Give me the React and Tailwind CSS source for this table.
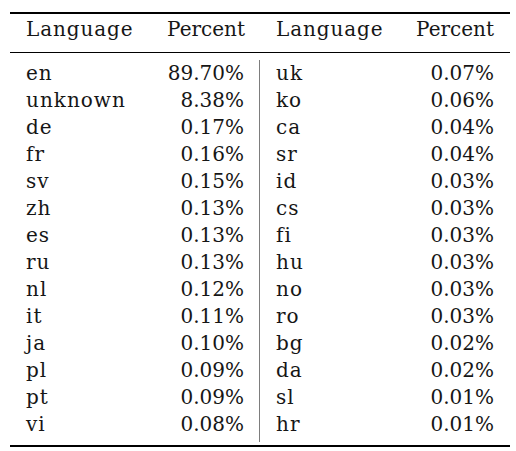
import React from 'react';

const left = [
    ['en', '89.70%'],
    ['unknown', '8.38%'],
    ['de', '0.17%'],
    ['fr', '0.16%'],
    ['sv', '0.15%'],
    ['zh', '0.13%'],
    ['es', '0.13%'],
    ['ru', '0.13%'],
    ['nl', '0.12%'],
    ['it', '0.11%'],
    ['ja', '0.10%'],
    ['pl', '0.09%'],
    ['pt', '0.09%'],
    ['vi', '0.08%'],
];

const right = [
    ['uk', '0.07%'],
    ['ko', '0.06%'],
    ['ca', '0.04%'],
    ['sr', '0.04%'],
    ['id', '0.03%'],
    ['cs', '0.03%'],
    ['fi', '0.03%'],
    ['hu', '0.03%'],
    ['no', '0.03%'],
    ['ro', '0.03%'],
    ['bg', '0.02%'],
    ['da', '0.02%'],
    ['sl', '0.01%'],
    ['hr', '0.01%'],
];

const Rows = ({ rows }) => (
    <div className="flex flex-col">
        {rows.map(([lang, pct]) => (
            <div key={lang} className="flex justify-between h-[27px] leading-[27px]">
                <span className="tracking-[1px]">{lang}</span>
                <span>{pct}</span>
            </div>
        ))}
    </div>
);

const Header = () => (
    <div className="flex justify-between leading-[27px]">
        <span className="tracking-[0.9px]">Language</span>
        <span>Percent</span>
    </div>
);

export default function App() {
    return (
        <div className="w-[516px] h-[451px] bg-white pt-[12px] pl-[10px] text-[#161616] font-[family-name:DejaVu_Serif,serif] text-[20px]">
            <div className="w-[500px] border-t-2 border-b-[2.5px] border-black">
                <div className="grid grid-cols-2 pt-[2px] pb-[9px] border-b-[1.5px] border-black">
                    <div className="pl-[16px] pr-[15px]"><Header /></div>
                    <div className="pl-[16px] pr-[16px]"><Header /></div>
                </div>
                <div className="grid grid-cols-2 pt-[7px] pb-[3px]">
                    <div className="pl-[16px] pr-[15px] pb-[4px] border-r-[1.5px] border-[#7d7d7d]">
                        <Rows rows={left} />
                    </div>
                    <div className="pl-[16px] pr-[16px]">
                        <Rows rows={right} />
                    </div>
                </div>
            </div>
        </div>
    );
}
